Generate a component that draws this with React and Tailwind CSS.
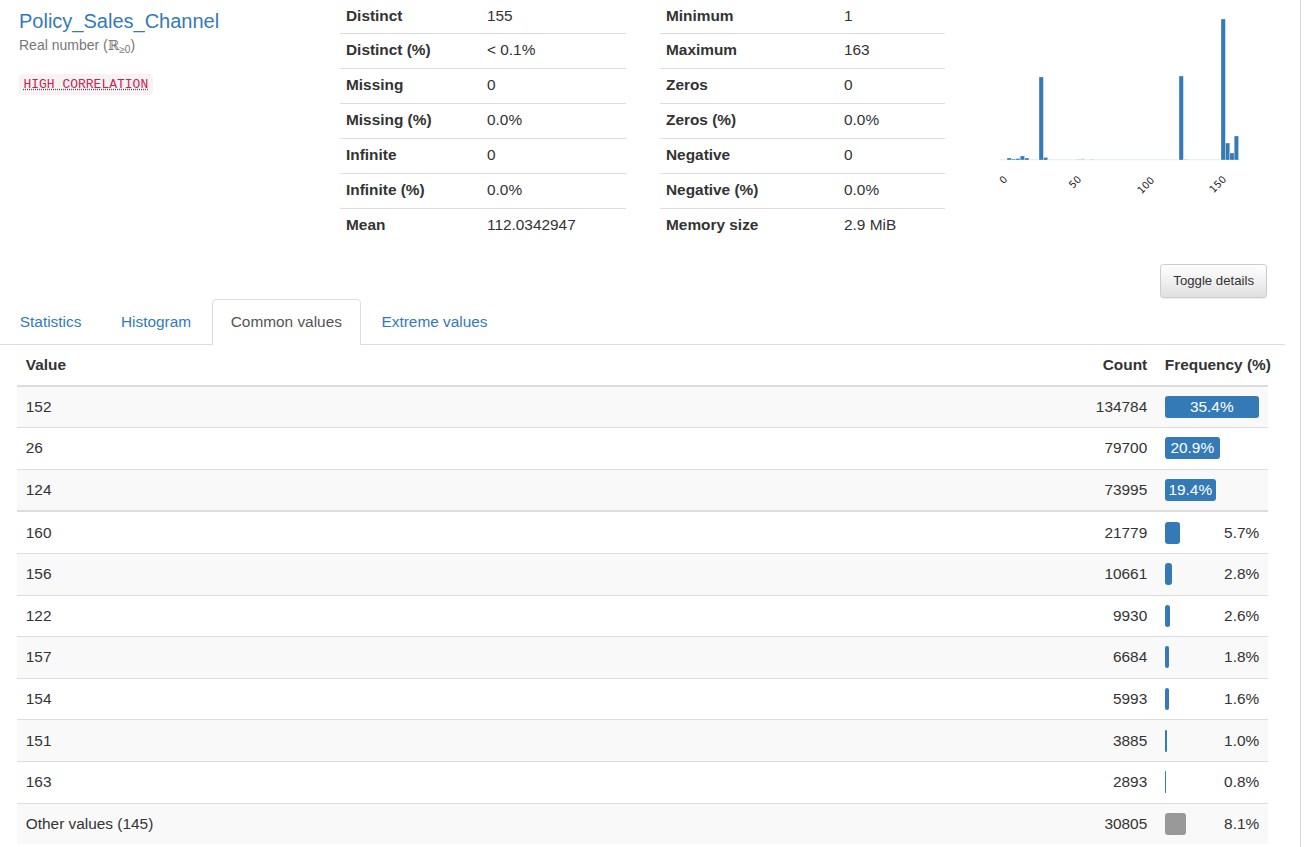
const statsLeft = [
  ['Distinct', '155'],
  ['Distinct (%)', '< 0.1%'],
  ['Missing', '0'],
  ['Missing (%)', '0.0%'],
  ['Infinite', '0'],
  ['Infinite (%)', '0.0%'],
  ['Mean', '112.0342947'],
];

const statsRight = [
  ['Minimum', '1'],
  ['Maximum', '163'],
  ['Zeros', '0'],
  ['Zeros (%)', '0.0%'],
  ['Negative', '0'],
  ['Negative (%)', '0.0%'],
  ['Memory size', '2.9 MiB'],
];

// value, count, pct, bar width (px), label inside bar
const commonValues = [
  { v: '152', c: '134784', p: '35.4%', w: 94, inside: true },
  { v: '26', c: '79700', p: '20.9%', w: 55, inside: true },
  { v: '124', c: '73995', p: '19.4%', w: 51, inside: true },
  { v: '160', c: '21779', p: '5.7%', w: 15, sep: true },
  { v: '156', c: '10661', p: '2.8%', w: 7 },
  { v: '122', c: '9930', p: '2.6%', w: 5 },
  { v: '157', c: '6684', p: '1.8%', w: 4 },
  { v: '154', c: '5993', p: '1.6%', w: 4 },
  { v: '151', c: '3885', p: '1.0%', w: 2 },
  { v: '163', c: '2893', p: '0.8%', w: 1 },
  { v: 'Other values (145)', c: '30805', p: '8.1%', w: 21, other: true },
];

// page x, bar top y (baseline 160), pale?
const bins = [
  [1007, 158], [1011.4, 159], [1015.8, 158.5], [1020.2, 156], [1024.6, 158],
  [1030, 159.3, true], [1034.4, 159.3, true], [1039, 77], [1043.4, 157.5],
  [1047.8, 159.3, true], [1076, 159, true], [1080.4, 158.5, true], [1090, 159, true],
  [1165, 159.5, true], [1174.6, 159.5, true], [1179, 76], [1183.4, 159, true],
  [1196, 159.5, true], [1216.6, 159.3, true], [1221, 19], [1225.4, 143],
  [1229.8, 153], [1234.2, 136],
];

const ticks = [
  ['0', 1008, 180],
  ['50', 1082, 180],
  ['100', 1155, 181],
  ['150', 1227, 180],
];

function StatTable({ rows, labelW }) {
  return (
    <div className="flex flex-col">
      {rows.map(([k, val], i) => (
        <div
          key={k}
          className={
            i === 0
              ? 'flex pt-[5px] pb-[6px]'
              : 'flex border-t border-[#ddd] pt-[5px] pb-[7px]'
          }
        >
          <div className="px-[6px] font-bold" style={{ width: labelW }}>
            {k}
          </div>
          <div className="px-[6px]">{val}</div>
        </div>
      ))}
    </div>
  );
}

function MiniHistogram() {
  const ox = 945;
  return (
    <svg className="shrink-0" width="340" height="240" viewBox="0 0 340 240">
      <rect x={1000 - ox} y="159.4" width="240" height="0.8" fill="#dde7f2" />
      {bins.map(([x, top, pale], i) => (
        <rect
          key={i}
          x={x - ox}
          y={top}
          width="4.4"
          height={160 - top}
          fill="#337ab7"
          fillOpacity={pale ? 0.25 : 1}
          stroke="#ffffff"
          strokeOpacity="0.55"
          strokeWidth="0.6"
        />
      ))}
      {ticks.map(([t, x, y]) => (
        <text
          key={t}
          x={x - ox}
          y={y}
          fontSize="10"
          fill="#262626"
          textAnchor="end"
          fontFamily="'DejaVu Sans', sans-serif"
          transform={`rotate(-45 ${x - ox} ${y})`}
        >
          {t}
        </text>
      ))}
    </svg>
  );
}

function FreqCell({ row }) {
  const barColor = row.other ? 'bg-[#999]' : 'bg-[#337ab7]';
  if (row.inside) {
    return (
      <div
        className={`flex h-[22px] items-center justify-center rounded-[3px] text-white ${barColor}`}
        style={{ width: row.w }}
      >
        {row.p}
      </div>
    );
  }
  return (
    <div className="flex items-center justify-between">
      <div className={`h-[22px] rounded-[3px] ${barColor}`} style={{ width: row.w }} />
      <span>{row.p}</span>
    </div>
  );
}

export default function App() {
  const tabs = ['Statistics', 'Histogram', 'Common values', 'Extreme values'];
  return (
    <div className="min-h-[847px] w-[1301px] border-r border-[#dcdcdc] bg-white font-['Liberation_Sans',Arial,sans-serif] text-[15.4px] leading-[22px] text-[#333]">
      <div className="w-[1285px]">
        <div className="flex h-[264px]">
          <div className="w-[340px] shrink-0 pt-[10px] pl-[19px]">
            <div className="text-[20px] leading-[22px] text-[#337ab7]">
              Policy_Sales_Channel
            </div>
            <div className="mt-[3px] text-[14px] leading-[20px] text-[#777]">
              Real number (
              <span className="font-['DejaVu_Serif',serif] text-[14px]">ℝ</span>
              <sub className="text-[10px]">≥0</sub>)
            </div>
            <div className="mt-[17px]">
              <abbr className="inline-block rounded-[4px] bg-[#f9f2f4] px-[4.4px] py-[0px] font-['Liberation_Mono',monospace] text-[13px] leading-[21px] text-[#c7254e] underline decoration-[#555] decoration-dotted">
                HIGH CORRELATION
              </abbr>
            </div>
          </div>
          <div className="w-[286px] shrink-0">
            <StatTable rows={statsLeft} labelW={141} />
          </div>
          <div className="w-[34px] shrink-0" />
          <div className="w-[285px] shrink-0">
            <StatTable rows={statsRight} labelW={178} />
          </div>
          <MiniHistogram />
        </div>

        <div className="flex h-[35px] justify-end pr-[18px]">
          <button className="h-[34px] rounded-[3.3px] border border-[#ccc] bg-linear-to-b from-white to-[#e0e0e0] px-[12px] text-[13.2px] leading-[20px] text-[#333] shadow-[0_1px_1px_rgba(0,0,0,0.075)]">
            Toggle details
          </button>
        </div>

        <ul className="flex border-b border-[#ddd] pl-[1px]">
          {tabs.map((t) => {
            const active = t === 'Common values';
            return (
              <li key={t} className="mr-[2px] -mb-px">
                <div
                  className={
                    active
                      ? 'rounded-t-[4.4px] border border-[#ddd] border-b-transparent bg-white px-[17.8px] py-[11px] text-[#555]'
                      : 'rounded-t-[4.4px] border border-transparent px-[17.8px] py-[11px] text-[#337ab7]'
                  }
                >
                  {t}
                </div>
              </li>
            );
          })}
        </ul>

        <div className="mx-[17px] w-[1251px]">
          <div className="flex border-b-2 border-[#ddd] py-[8.8px] font-bold">
            <div className="flex-1 px-[8.8px]">Value</div>
            <div className="w-[100px] px-[8.8px] text-right">Count</div>
            <div className="w-[112px] whitespace-nowrap px-[8.8px]">Frequency (%)</div>
          </div>
          {commonValues.map((row, i) => (
            <div
              key={row.v}
              className={[
                'flex items-center py-[9.3px]',
                i % 2 === 0 ? 'bg-[#f9f9f9]' : 'bg-white',
                i === 0 ? '' : row.sep ? 'border-t-2 border-[#ddd]' : 'border-t border-[#ddd]',
              ].join(' ')}
            >
              <div className="flex-1 px-[8.8px]">{row.v}</div>
              <div className="w-[100px] px-[8.8px] text-right">{row.c}</div>
              <div className="w-[112px] px-[8.8px]">
                <FreqCell row={row} />
              </div>
            </div>
          ))}
        </div>
      </div>
    </div>
  );
}
